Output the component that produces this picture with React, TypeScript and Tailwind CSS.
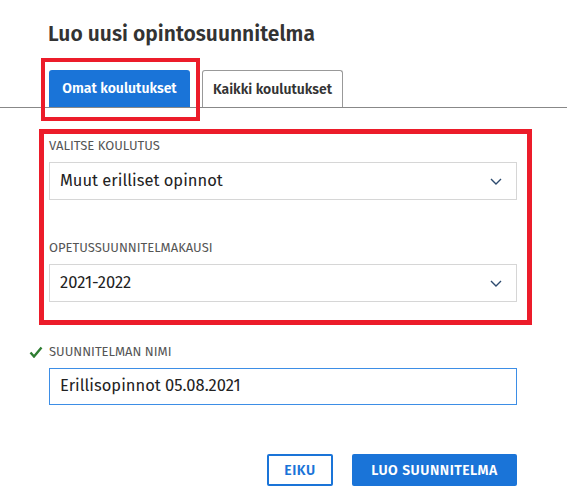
import React from "react";

const font = { fontFamily: '"Fira Sans", "Noto Sans", "Open Sans", sans-serif' };

function Chevron() {
  return (
    <svg width="12" height="7" viewBox="0 0 12 7" fill="none">
      <path d="M1 1l5 5 5-5" stroke="#2c4a6e" strokeWidth="1.4" />
    </svg>
  );
}

function SelectBox({ label, value, top }: { label: string; value: string; top: string }) {
  return (
    <div className={top}>
      <div className="text-[13px] leading-[16px] text-[#555] uppercase">{label}</div>
      <div className="mt-[8px] flex h-[38px] w-[468px] items-center justify-between border border-[#d6d6d6] pl-[10px] pr-[14px]">
        <span className="text-[16.5px] text-[#222]">{value}</span>
        <Chevron />
      </div>
    </div>
  );
}

export default function App() {
  return (
    <div className="h-[503px] w-[567px] bg-white" style={font}>
      <h1 className="pl-[48px] pt-[20px] text-[21px] font-semibold leading-[28px] text-[#333]">
        Luo uusi opintosuunnitelma
      </h1>

      <div className="relative mt-[22px] flex items-end gap-[12px] border-b border-[#888] pl-[49px]">
        <button className="flex h-[37px] w-[141px] items-center justify-center rounded-t-[3px] bg-[#1a74d8] text-[14px] font-semibold text-white">
          Omat koulutukset
        </button>
        <button className="flex h-[37px] w-[141px] items-center justify-center rounded-t-[3px] border border-b-0 border-[#999] bg-white text-[14px] font-semibold text-[#333]">
          Kaikki koulutukset
        </button>
        <div className="absolute left-[41px] top-[-12px] h-[63px] w-[159px] border-4 border-[#ec1c2a]" />
      </div>

      <div className="ml-[39px] mt-[21px] h-[196px] w-[493px] border-[5px] border-[#ec1c2a] pl-[5px] pt-[4px]">
        <SelectBox label="Valitse koulutus" value="Muut erilliset opinnot" top="" />
        <SelectBox label="Opetussuunnitelmakausi" value="2021-2022" top="mt-[40px]" />
      </div>

      <div className="ml-[29px] mt-[19px] flex items-center gap-[6px]">
        <svg width="14" height="12" viewBox="0 0 14 12" fill="none">
          <path d="M1.5 6.5l3.5 4L12.5 1.5" stroke="#2e7d32" strokeWidth="2.4" />
        </svg>
        <span className="text-[13px] leading-[16px] text-[#555]">SUUNNITELMAN NIMI</span>
      </div>
      <div className="ml-[49px] mt-[8px] flex h-[37px] w-[468px] items-center border border-[#3d8ee6] pl-[10px]">
        <span className="text-[16.5px] text-[#222]">Erillisopinnot 05.08.2021</span>
      </div>

      <div className="mt-[49px] flex justify-end gap-[19px] pr-[50px]">
        <button className="h-[32px] w-[66px] rounded-[2px] border-2 border-[#1a74d8] text-[14px] font-semibold tracking-[0.5px] text-[#1a74d8]">
          EIKU
        </button>
        <button className="h-[32px] w-[165px] rounded-[2px] bg-[#1a74d8] text-[14px] font-semibold tracking-[0.5px] text-white">
          LUO SUUNNITELMA
        </button>
      </div>
    </div>
  );
}
